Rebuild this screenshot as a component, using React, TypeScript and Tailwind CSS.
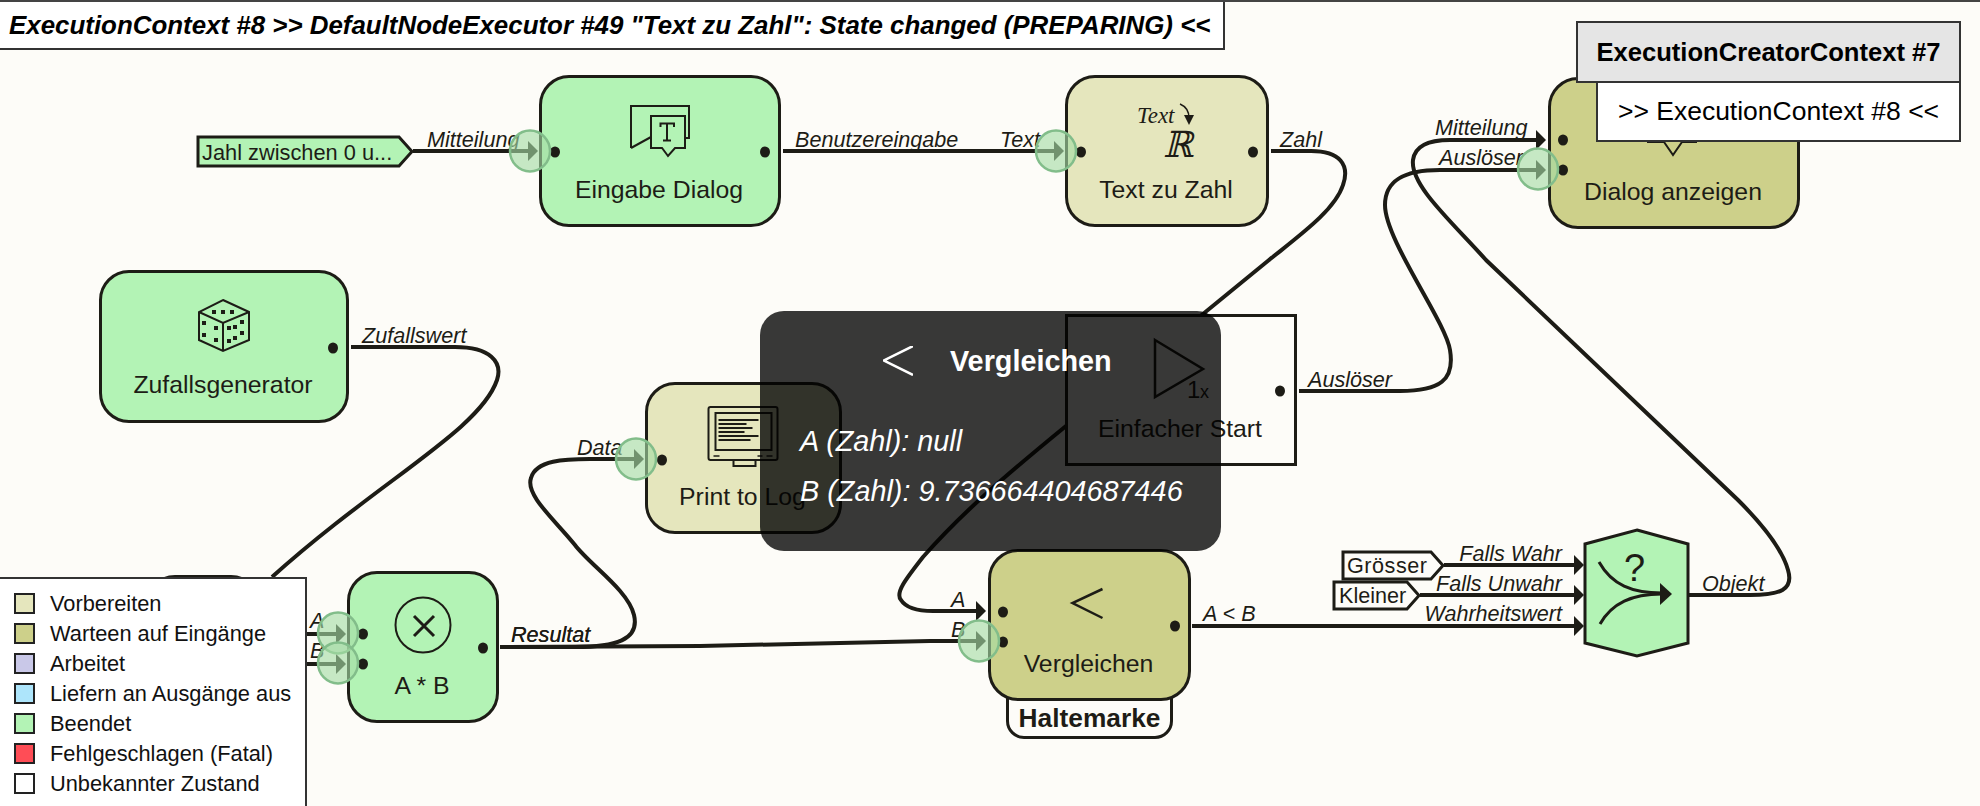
import React from 'react';

const INK = '#1d1c16';

type NodeProps = {
  box: string;
  fill: string;
  label?: string;
  square?: boolean;
  view?: string;
  children?: React.ReactNode;
};

// Executor node, the icon is drawn in page coordinates through its viewBox
const FlowNode: React.FC<NodeProps> = ({ box, fill, label, square, view, children }) => (
  <div
    className={`absolute box-border flex flex-col items-center border-[3px] border-[#1d1c16] pt-[17px] ${
      square ? '' : 'rounded-[30px]'
    } ${box} ${fill}`}
  >
    <svg viewBox={view} className="h-[62px] w-[80px] shrink-0 overflow-visible">
      {children}
    </svg>
    {label && (
      <span className="mr-[2px] mt-[18px] whitespace-nowrap text-[24.8px] leading-[30px] text-[#1d1c16]">{label}</span>
    )}
  </div>
);

const Arrow = ({ tip, y }: { tip: number; y: number }) => (
  <polygon points={`${tip},${y} ${tip - 10},${y - 10} ${tip - 10},${y + 10}`} fill={INK} />
);

const Port = ({ x, y }: { x: number; y: number }) => (
  <ellipse cx={x} cy={y} rx={20} ry={20.5} fill="#a5dca5" fillOpacity={0.62} stroke="#82bd8a" strokeWidth={2.5} />
);

const WIRES = [
  'M413 151 L530 151',
  'M783 151 L1056 151',
  'M1271 151 L1311 151 C1340 151 1350 165 1343 185 C1335 210 1300 235 1269 260 L1066 426 C1000 480 960 515 923 557 C905 580 895 593 901 600 C906 608 918 611 933 611 L976 611',
  'M351 347 L455 347 C490 347 503 362 497 380 C480 430 380 480 272 577',
  'M500 647 L575 647 C615 647 640 640 634 615 C628 590 590 565 575 545 C555 520 525 495 531 478 C536 460 565 459 590 459 L636 459',
  'M500 647 L700 646 L930 641 L979 641',
  'M1192 626 L1574 626',
  'M1444 565 L1574 565',
  'M1420 595 L1574 595',
  'M1689 595 L1750 595 C1780 595 1794 590 1788 570 C1783 552 1765 527 1738 500 L1486 260 C1450 220 1410 185 1413 160 C1415 145 1430 140 1450 140 L1536 140',
  'M1299 391 L1400 391 C1440 391 1455 380 1450 350 C1445 320 1385 240 1385 205 C1385 180 1405 170 1440 170 L1538 170',
  'M290 634 L338 634',
  'M290 664 L338 664',
];

const WIRE_LABELS: { x: number; y: number; text: string; end?: boolean }[] = [
  { x: 427, y: 147, text: 'Mitteilung' },
  { x: 795, y: 147, text: 'Benutzereingabe' },
  { x: 1000, y: 147, text: 'Text' },
  { x: 1280, y: 147, text: 'Zahl' },
  { x: 362, y: 343, text: 'Zufallswert' },
  { x: 577, y: 455, text: 'Data' },
  { x: 1435, y: 135, text: 'Mitteilung' },
  { x: 1439, y: 165, text: 'Auslöser' },
  { x: 1308, y: 387, text: 'Auslöser' },
  { x: 951, y: 607, text: 'A' },
  { x: 951, y: 637, text: 'B' },
  { x: 1203, y: 621, text: 'A < B' },
  { x: 511, y: 642, text: 'Resultat' },
  { x: 511, y: 642, text: 'Resultat' },
  { x: 310, y: 628, text: 'A' },
  { x: 310, y: 658, text: 'B' },
  { x: 1562, y: 561, text: 'Falls Wahr', end: true },
  { x: 1562, y: 591, text: 'Falls Unwahr', end: true },
  { x: 1562, y: 621, text: 'Wahrheitswert', end: true },
  { x: 1702, y: 591, text: 'Objekt' },
];

const DOTS = [
  [555, 152], [765, 152], [1081, 152], [1253, 152], [1563, 140], [1563, 170],
  [333, 348], [662, 460], [1280, 391], [363, 634], [363, 664], [483, 648],
  [1003, 612], [1003, 642], [1175, 626],
];

const DICE_PIPS = [
  [214, 312], [223, 312], [232, 312], [204, 323], [216, 328], [204, 335], [216, 340],
  [229, 328], [235, 327], [242, 322], [229, 341], [235, 338], [242, 333],
];

const LEGEND = [
  { label: 'Vorbereiten', swatch: 'bg-[#e5e6bd]' },
  { label: 'Warteen auf Eingänge', swatch: 'bg-[#cdd08a]' },
  { label: 'Arbeitet', swatch: 'bg-[#c9c8e8]' },
  { label: 'Liefern an Ausgänge aus', swatch: 'bg-[#ade5fb]' },
  { label: 'Beendet', swatch: 'bg-[#b3f3b5]' },
  { label: 'Fehlgeschlagen (Fatal)', swatch: 'bg-[#ff4d56]' },
  { label: 'Unbekannter Zustand', swatch: 'bg-white' },
];

const LOG_LINES = [
  [420, 758], [424, 746], [428, 752], [432, 744], [436, 758], [440, 750],
];

const App: React.FC = () => {
  return (
    <div className="relative h-[806px] w-[1980px] overflow-hidden bg-[#fdfcf8] font-['Liberation_Sans',sans-serif]">
      {/* Wires and their labels */}
      <svg className="absolute inset-0 h-[806px] w-[1980px]" fill="none">
        {WIRES.map(d => (
          <path key={d} d={d} stroke={INK} strokeWidth={4} />
        ))}
        <Arrow tip={538} y={151} />
        <Arrow tip={1064} y={151} />
        <Arrow tip={986} y={611} />
        <Arrow tip={644} y={459} />
        <Arrow tip={986} y={641} />
        <Arrow tip={1584} y={565} />
        <Arrow tip={1584} y={595} />
        <Arrow tip={1584} y={626} />
        <Arrow tip={1546} y={140} />
        <Arrow tip={1546} y={170} />
        <Arrow tip={346} y={634} />
        <Arrow tip={346} y={664} />
        {WIRE_LABELS.map((l, i) => (
          <text
            key={i}
            x={l.x}
            y={l.y}
            textAnchor={l.end ? 'end' : 'start'}
            fill={INK}
            className="text-[21.6px] italic"
          >
            {l.text}
          </text>
        ))}
      </svg>

      {/* Constant tags */}
      <svg className="absolute inset-0 h-[806px] w-[1980px]">
        <polygon points="198,137 399,137 412,151.5 399,166 198,166" fill="#b3f3b5" stroke={INK} strokeWidth={3} />
        <polygon points="1343,552 1431,552 1443,565.5 1431,579 1343,579" fill="#fdfcf8" stroke={INK} strokeWidth={3} />
        <polygon points="1334,582 1407,582 1419,595.5 1407,609 1334,609" fill="#fdfcf8" stroke={INK} strokeWidth={3} />
        <text x={202} y={160} fill={INK} className="text-[21.8px]">Jahl zwischen 0 u...</text>
        <text x={1347} y={573} fill={INK} className="text-[21.6px]" textLength={80}>Grösser</text>
        <text x={1339} y={603} fill={INK} className="text-[21.6px]">Kleiner</text>
      </svg>

      {/* Node hidden behind the legend */}
      <div className="absolute left-[145px] top-[575px] h-[120px] w-[116px] rounded-[30px] border-[3px] border-[#1d1c16] bg-[#b3f3b5]" />

      <FlowNode box="left-[539px] top-[75px] w-[242px] h-[152px]" fill="bg-[#b3f3b5]" label="Eingabe Dialog" view="620 95 80 62">
        <g fill="none" stroke={INK} strokeWidth={2}>
          <path d="M631 148 V106 H689 V138 H685" />
          <path d="M631 148 L651 137" />
          <path d="M651 116 H685 V148 H675 L668 156 L662 148 H651 Z" />
          <path d="M660.5 127 V123.5 H674 V127 M667 124 V140 M663 140.5 H671" />
        </g>
      </FlowNode>

      <FlowNode box="left-[1065px] top-[75px] w-[204px] h-[152px]" fill="bg-[#e5e6bd]" label="Text zu Zahl" view="1127 95 80 62">
        <text x={1137} y={123} fill={INK} className="font-['Liberation_Serif',serif] text-[23px] italic">Text</text>
        <path d="M1180 104 C1187 107 1189 112 1189 118" fill="none" stroke={INK} strokeWidth={1.5} />
        <polygon points="1189,125 1184,115 1194,115" fill={INK} />
        <text x={1163} y={157} fill={INK} className="font-['DejaVu_Serif',serif] text-[36px] italic">ℝ</text>
      </FlowNode>

      <FlowNode box="left-[1548px] top-[77px] w-[252px] h-[152px]" fill="bg-[#cdd08a]" label="Dialog anzeigen" view="1634 97 80 62">
        <path d="M1647 142 H1664 L1673 155 L1682 142 H1697" fill="none" stroke={INK} strokeWidth={2} />
      </FlowNode>

      <FlowNode box="left-[99px] top-[270px] w-[250px] h-[153px]" fill="bg-[#b3f3b5]" label="Zufallsgenerator" view="184 290 80 62">
        <g fill="none" stroke={INK} strokeWidth={2}>
          <path d="M223 300 L249 312 V340 L223 351 L199 340 V312 Z" />
          <path d="M199 312 L223 323 L249 312 M223 323 V351" />
        </g>
        {DICE_PIPS.map(([x, y]) => (
          <rect key={`${x}-${y}`} x={x - 2} y={y - 2} width={4} height={4} fill={INK} />
        ))}
      </FlowNode>

      <FlowNode box="left-[645px] top-[382px] w-[197px] h-[152px]" fill="bg-[#e5e6bd]" label="Print to Log" view="703.5 402 80 62">
        <g fill="none" stroke={INK} strokeWidth={2}>
          <rect x={708} y={407} width={69} height={53} rx={2} />
          <rect x={715} y={413} width={56} height={37} />
          <path d="M733 460 V466 H755 V460" />
        </g>
        {LOG_LINES.map(([y, end]) => (
          <path key={y} d={`M718 ${y} H${end}`} stroke={INK} strokeWidth={2} />
        ))}
        <path d="M713 456 H719 M757 456 H762 M766 456 H772" stroke={INK} strokeWidth={1.5} />
      </FlowNode>

      <FlowNode box="left-[1065px] top-[314px] w-[232px] h-[152px]" fill="bg-[#fdfcf8]" square label="Einfacher Start" view="1141 334 80 62">
        <path d="M1155 340 L1203 369 L1155 397 Z" fill="none" stroke={INK} strokeWidth={2.5} />
        <text x={1187} y={398} fill={INK} className="text-[24px]">1</text>
        <text x={1200} y={398} fill={INK} className="text-[18px]">x</text>
      </FlowNode>

      <FlowNode box="left-[347px] top-[571px] w-[152px] h-[152px]" fill="bg-[#b3f3b5]" label="A * B" view="383 591 80 62">
        <circle cx={423} cy={625} r={27.5} fill="none" stroke={INK} strokeWidth={2} />
        <path d="M414 616 L434 636 M434 616 L414 636" fill="none" stroke={INK} strokeWidth={3} />
      </FlowNode>

      {/* Breakpoint tab sits behind the node it belongs to */}
      <div className="absolute left-[1006px] top-[680px] box-border flex h-[59px] w-[167px] items-end justify-center rounded-b-[18px] border-[3px] border-[#1d1c16] bg-[#fdfcf8] pb-[3px]">
        <span className="text-[26.3px] font-bold leading-[30px] text-[#1d1c16]">Haltemarke</span>
      </div>

      <FlowNode box="left-[988px] top-[549px] w-[203px] h-[152px]" fill="bg-[#cdd08a]" label="Vergleichen" view="1049.5 569 80 62">
        <path d="M1102 589 L1072 603 L1102 618" fill="none" stroke={INK} strokeWidth={2.5} />
      </FlowNode>

      {/* Switch node */}
      <svg className="absolute inset-0 h-[806px] w-[1980px]" fill="none">
        <polygon points="1637,530 1688,544 1688,643 1637,656 1585,643 1585,544" fill="#b3f3b5" stroke={INK} strokeWidth={3} />
        <path d="M1599 562 C1612 585 1632 593 1662 593" stroke={INK} strokeWidth={3} />
        <path d="M1600 624 C1612 603 1632 594 1662 594" stroke={INK} strokeWidth={3} />
        <polygon points="1672,594 1660,583 1660,605" fill={INK} />
        <text x={1624} y={581} fill={INK} className="text-[38px]">?</text>
      </svg>

      {/* Ports sit on top of the nodes */}
      <svg className="absolute inset-0 h-[806px] w-[1980px]">
        {DOTS.map(([x, y]) => (
          <ellipse key={`${x}-${y}`} cx={x} cy={y} rx={5} ry={5.5} fill={INK} />
        ))}
        <Port x={530} y={151} />
        <Port x={1056} y={151} />
        <Port x={1538} y={169} />
        <Port x={636} y={459} />
        <Port x={338} y={633} />
        <Port x={338} y={663} />
        <Port x={979} y={641} />
      </svg>

      {/* Title bar */}
      <div className="absolute inset-x-0 top-0 h-[2px] bg-[#444]" />
      <div className="absolute left-0 top-[2px] box-border flex h-[48px] w-[1225px] items-center border-y-2 border-r-2 border-[#333] border-t-0 bg-white pl-[9px]">
        <span className="whitespace-nowrap text-[25.9px] font-bold italic text-black">
          ExecutionContext #8 &gt;&gt; DefaultNodeExecutor #49 "Text zu Zahl": State changed (PREPARING) &lt;&lt;
        </span>
      </div>

      {/* Context stack */}
      <div className="absolute left-[1576px] top-[21px] flex w-[385px] flex-col items-end">
        <div className="box-border flex h-[62px] w-full items-center justify-center border-2 border-[#333] bg-[#e5e5e5]">
          <span className="whitespace-nowrap text-[25.6px] font-bold text-black">ExecutionCreatorContext #7</span>
        </div>
        <div className="-mt-[2px] box-border flex h-[61px] w-[365px] items-center justify-center border-2 border-[#333] bg-white pt-[1px]">
          <span className="whitespace-nowrap text-[26.5px] text-black">&gt;&gt; ExecutionContext #8 &lt;&lt;</span>
        </div>
      </div>

      {/* Legend */}
      <div className="absolute bottom-0 left-0 top-[577px] box-border flex w-[307px] flex-col gap-[9px] border-r-2 border-t-2 border-[#333] bg-white pl-[14px] pt-[14px]">
        {LEGEND.map(item => (
          <div key={item.label} className="flex h-[21px] items-center gap-[15px]">
            <span className={`box-border h-[21px] w-[21px] border-2 border-[#222] ${item.swatch}`} />
            <span className="whitespace-nowrap text-[21.8px] leading-[21px] text-[#111]">{item.label}</span>
          </div>
        ))}
      </div>

      {/* Tooltip of the hovered node */}
      <div className="absolute left-[760px] top-[311px] h-[240px] w-[461px] rounded-[24px] bg-black/[0.78] pl-[40px] pt-[34px] text-white">
        <div className="flex items-center gap-[37px] pl-[83px]">
          <svg viewBox="0 0 30 30" className="h-[30px] w-[30px]">
            <path d="M30 0 L1 14.5 L30 29" fill="none" stroke="#fff" strokeWidth={2.5} />
          </svg>
          <span className="text-[28.8px] font-bold leading-[32px]">Vergleichen</span>
        </div>
        <div className="mt-[39px] text-[28.8px] italic leading-[50px]">
          <div>A (Zahl): null</div>
          <div>B (Zahl): 9.736664404687446</div>
        </div>
      </div>
    </div>
  );
};

export default App;
